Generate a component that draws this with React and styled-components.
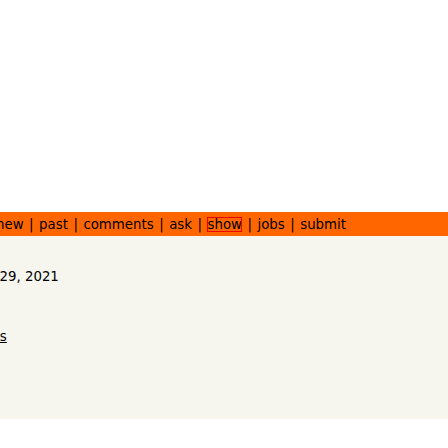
import React from "react";
import styled, { createGlobalStyle } from "styled-components";

const Global = createGlobalStyle`
  html, body { margin: 0; padding: 0; background: #ffffff; }
  body { font-family: "DejaVu Sans", Verdana, sans-serif; font-size: 13.333px; color: #000; }
`;

const Page = styled.div`
  width: 448px;
  height: 448px;
  overflow: hidden;
  display: flex;
  flex-direction: column;
`;

const TopSpace = styled.div`
  height: 212px;
  background: #ffffff;
`;

const Bar = styled.div`
  height: 24px;
  box-sizing: border-box;
  padding-top: 1px;
  background: #ff6600;
  display: flex;
  align-items: center;
  overflow: hidden;
`;

const Nav = styled.div`
  margin-left: -4px;
  white-space: nowrap;
  line-height: normal;
`;

const NavLink = styled.a`
  color: #000;
  text-decoration: none;
  outline: ${(p) => (p.$selected ? "1px solid #ee0000" : "none")};
  outline-offset: -1px;
`;

const Sep = styled.span`
  display: inline-block;
  width: 15.5px;
  text-align: center;
`;

const Content = styled.div`
  background: #f6f6ef;
  padding: 33.3px 0 75.2px 0;
  line-height: normal;
`;

const DateLine = styled.div`
  margin-left: -0.5px;
  white-space: nowrap;
`;

const LinkLine = styled.div`
  margin-top: 44.5px;
  margin-left: -0.2px;
  white-space: nowrap;
`;

const ULink = styled.a`
  color: #000;
  text-decoration: underline;
`;

const items = ["new", "past", "comments", "ask", "show", "jobs", "submit"];

export default function App() {
  return (
    <>
      <Global />
      <Page>
        <TopSpace />
        <Bar>
          <Nav>
            {items.map((it, i) => (
              <React.Fragment key={it}>
                {i > 0 && <Sep>|</Sep>}
                <NavLink href="#" $selected={it === "show"}>
                  {it}
                </NavLink>
              </React.Fragment>
            ))}
          </Nav>
        </Bar>
        <Content>
          <DateLine>29, 2021</DateLine>
          <LinkLine>
            <ULink href="#">s</ULink>
          </LinkLine>
        </Content>
      </Page>
    </>
  );
}
